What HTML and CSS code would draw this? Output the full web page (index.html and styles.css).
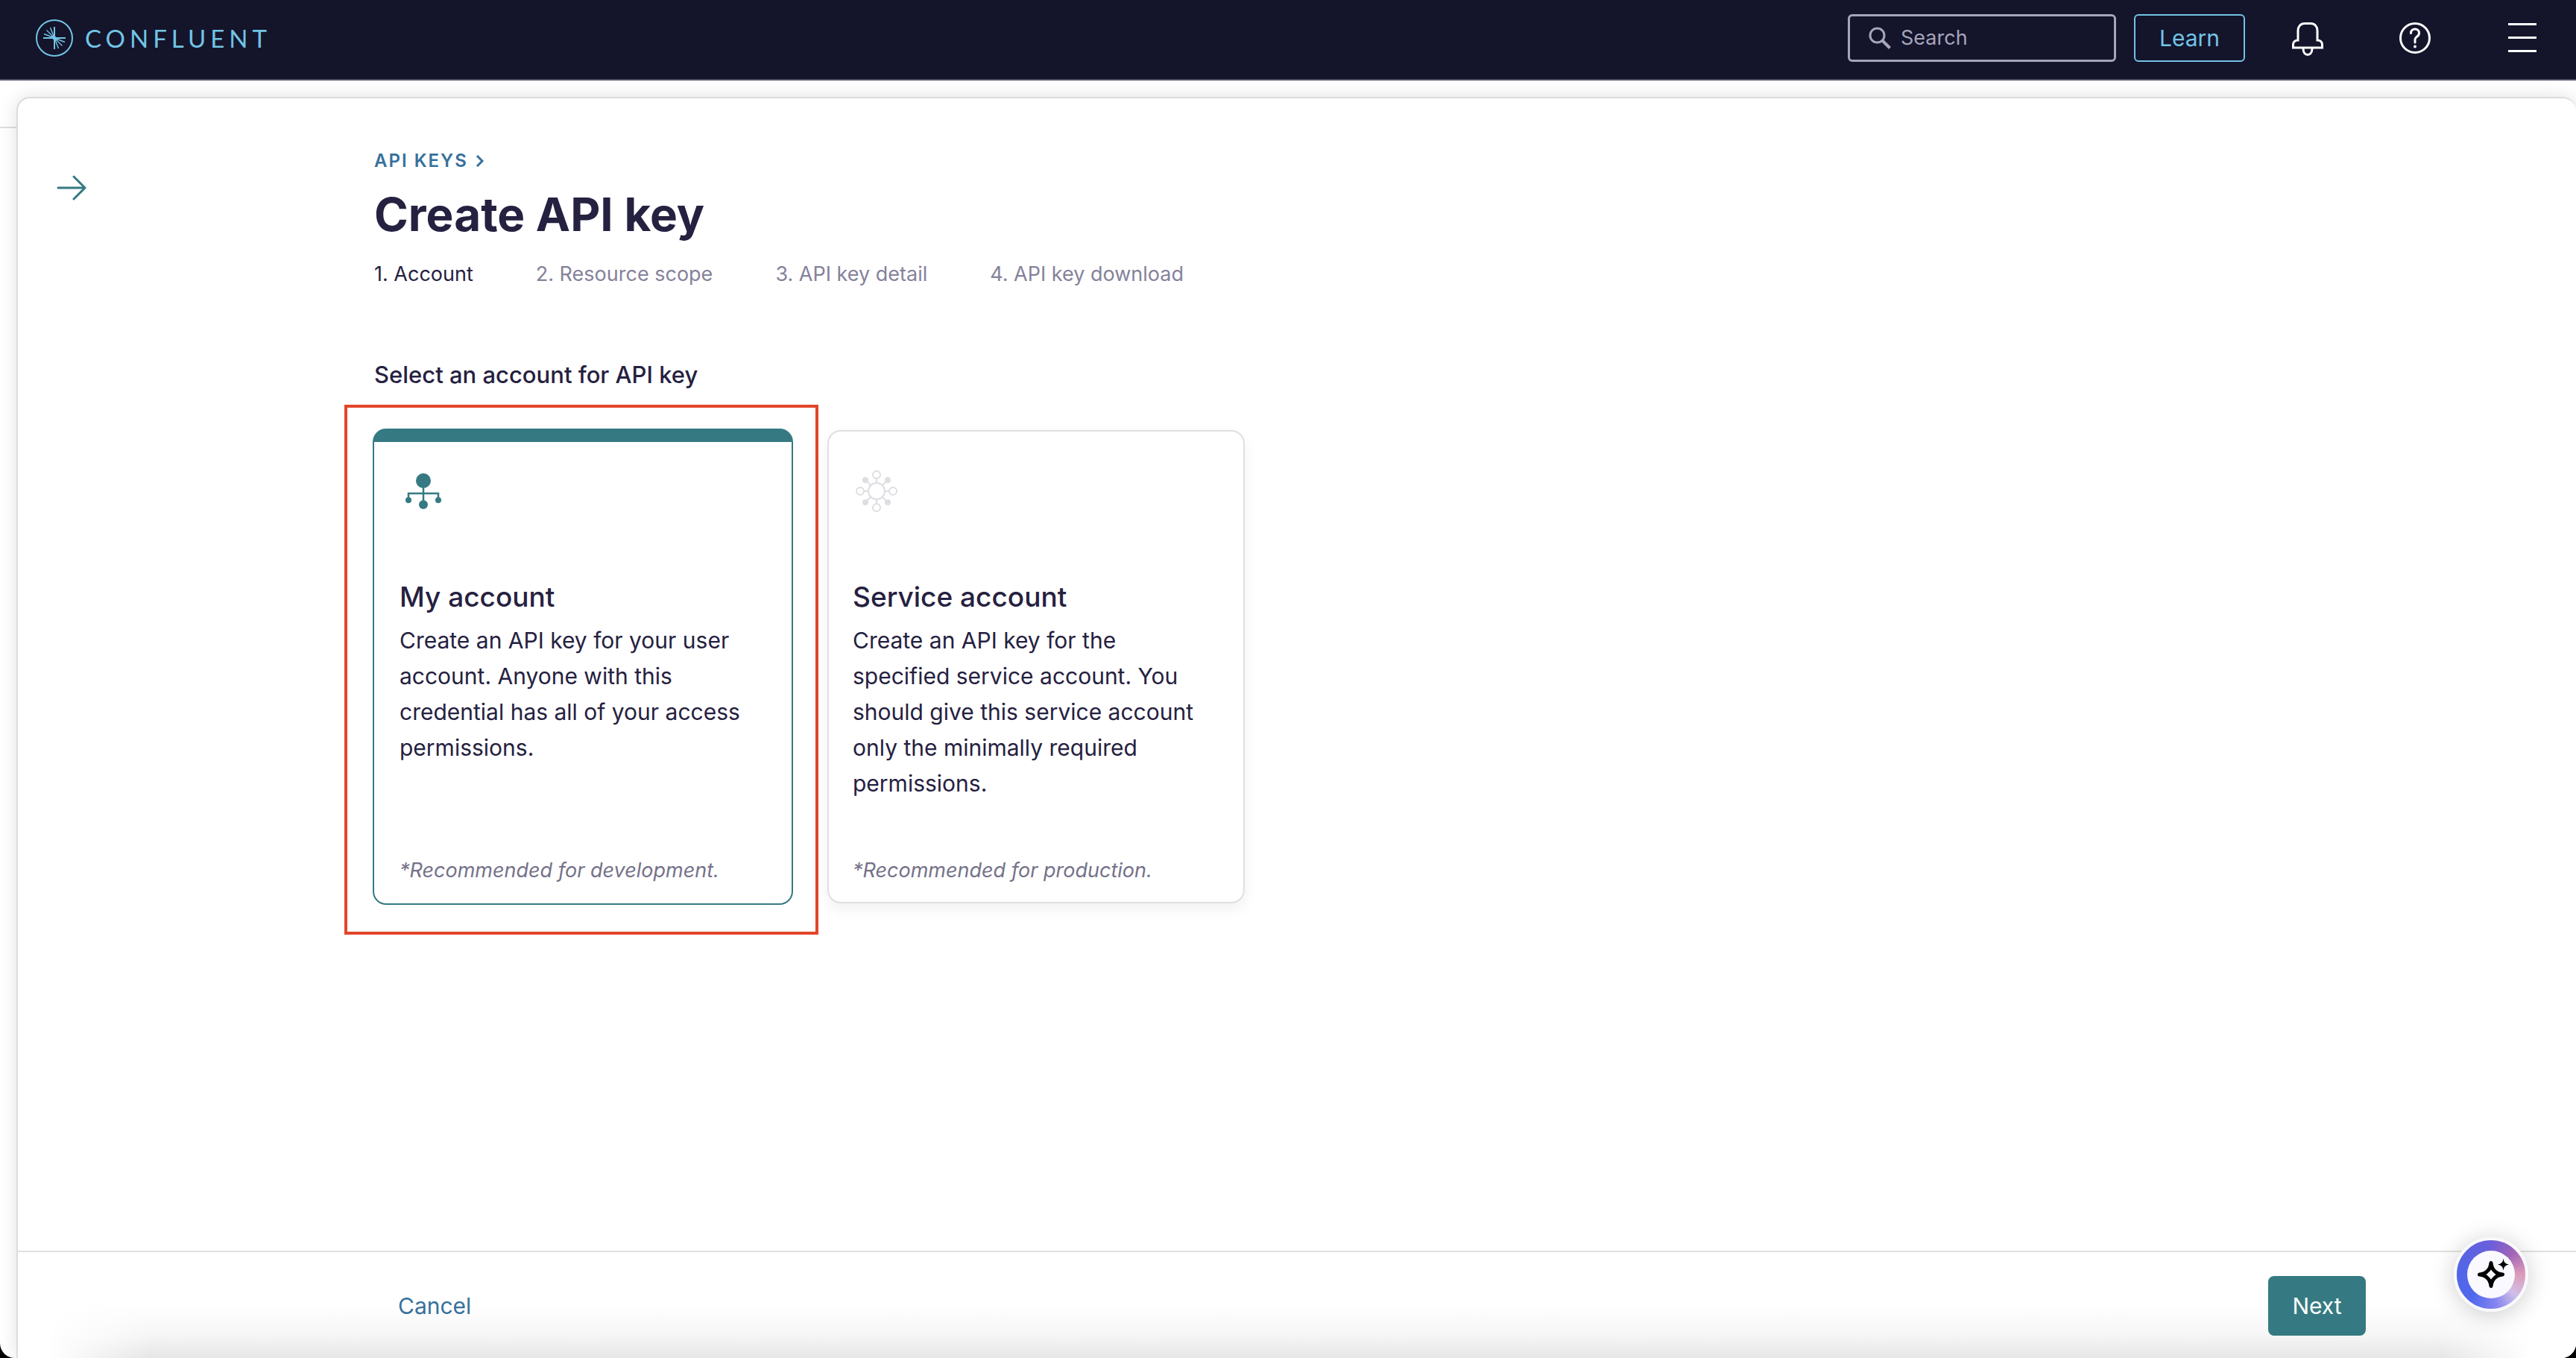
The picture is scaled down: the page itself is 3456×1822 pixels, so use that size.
FILE: index.html
```html
<!DOCTYPE html>
<html lang="en">
<head>
<meta charset="utf-8">
<meta name="viewport" content="width=device-width, initial-scale=1">
<title>Create API key</title>
<link rel="stylesheet" href="styles.css">
</head>
<body>
<header class="topbar">
  <a class="brand" href="#">
    <svg class="brand-mark" viewBox="0 0 50 50" fill="none" stroke="currentColor" aria-hidden="true">
      <circle cx="25" cy="25" r="24" stroke-width="2"/>
      <path stroke-width="2" d="M25 10v30M10 25h30"/>
      <path stroke-width="1.400" d="M25 25 19.500 11M25 25 14.500 14.500M25 25 11 19.500M25 25l5.500 14M25 25l10.500 10.500M25 25l14 5.500"/>
      <circle cx="25" cy="25" r="2.500" fill="currentColor" stroke="none"/>
    </svg>
    <span class="brand-name">CONFLUENT</span>
  </a>
  <div class="tools">
    <label class="search">
      <svg class="search-icon" viewBox="0 0 32 32" fill="none" stroke="currentColor" stroke-width="3" aria-hidden="true">
        <circle cx="12.500" cy="12.500" r="9.500"/><path stroke-width="4" d="m19.500 19.500 10 10"/>
      </svg>
      <input class="search-input" type="search" placeholder="Search" aria-label="Search">
    </label>
    <button class="learn" type="button">Learn</button>
    <button class="icon-button" type="button" aria-label="Notifications">
      <svg viewBox="0 0 48 48" fill="none" stroke="currentColor" stroke-width="3" aria-hidden="true">
        <path d="M20 4.500C14.500 4.500 11 8.500 11 14v13c-4 0-6.500 2.500-6.500 6v4h39v-4c0-3.500-2.500-6-6.500-6V14c0-5.500-3.500-9.500-9-9.500ZM18 38c0 5 2.500 8.500 6 8.500s6-3.500 6-8.500"/>
      </svg>
    </button>
    <button class="icon-button" type="button" aria-label="Help">
      <svg viewBox="0 0 48 48" fill="none" stroke="currentColor" stroke-width="3" stroke-linecap="round" aria-hidden="true">
        <circle cx="24" cy="24" r="19.500"/>
        <path d="M18.500 17.500c0-3.500 2.500-5.500 5.500-5.500s5.500 2 5.500 5.500c0 5-5.500 4.500-5.500 8.500v4"/>
        <circle cx="24" cy="35.500" r="2" fill="currentColor" stroke="none"/>
      </svg>
    </button>
    <button class="icon-button" type="button" aria-label="Menu">
      <svg viewBox="0 0 48 48" fill="none" stroke="currentColor" stroke-width="3" aria-hidden="true">
        <path d="M5 5.500h38M5 23.500h38M5 41.500h38"/>
      </svg>
    </button>
  </div>
</header>

<div class="stage">
  <main class="panel">
    <div class="panel-body">
      <button class="collapse" type="button" aria-label="Collapse panel">
        <svg viewBox="0 0 40 36" fill="none" stroke="currentColor" stroke-width="3" stroke-linecap="round" stroke-linejoin="round" aria-hidden="true">
          <path d="M2 18h36M23 3l15 15-15 15"/>
        </svg>
      </button>
      <div class="content">
        <a class="crumb" href="#">API KEYS
          <svg class="crumb-arrow" viewBox="0 0 12 16" fill="none" stroke="currentColor" stroke-width="3" aria-hidden="true"><path d="m2 1 7 7-7 7"/></svg>
        </a>
        <h1 class="title">Create API key</h1>
        <ol class="steps">
          <li class="step step-current">1. Account</li>
          <li class="step">2. Resource scope</li>
          <li class="step">3. API key detail</li>
          <li class="step">4. API key download</li>
        </ol>
        <h2 class="prompt">Select an account for API key</h2>
        <div class="cards">
          <div class="highlight">
            <button class="card card-selected" type="button" aria-pressed="true">
              <svg class="card-icon" viewBox="0 0 60 60" aria-hidden="true">
                <g fill="none" stroke="currentColor" stroke-width="2.500"><path d="M32 20v24M12 39V30h40v9"/></g>
                <g fill="currentColor"><circle cx="32" cy="13" r="10"/><circle cx="12" cy="39" r="4"/><circle cx="52" cy="39" r="4"/><circle cx="32" cy="45" r="6"/></g>
              </svg>
              <span class="card-title">My account</span>
              <span class="card-text">Create an API key for your user account. Anyone with this credential has all of your access permissions.</span>
              <span class="card-note">*Recommended for development.</span>
            </button>
          </div>
          <button class="card" type="button" aria-pressed="false">
            <svg class="card-icon card-icon-muted" viewBox="0 0 60 60" aria-hidden="true">
              <g fill="none" stroke="currentColor" stroke-width="2">
                <circle cx="32" cy="27" r="11"/>
                <circle cx="32" cy="5" r="5"/><circle cx="32" cy="49" r="5"/><circle cx="10" cy="27" r="5"/><circle cx="54" cy="27" r="5"/>
                <path d="M32 10v6M32 38v6M15 27h6M43 27h6M24 19l-7-7M40 19l7-7M24 35l-7 7M40 35l7 7"/>
              </g>
              <g fill="currentColor"><circle cx="17" cy="12" r="4"/><circle cx="47" cy="12" r="4"/><circle cx="17" cy="42" r="4"/><circle cx="47" cy="42" r="4"/></g>
            </svg>
            <span class="card-title">Service account</span>
            <span class="card-text">Create an API key for the specified service account. You should give this service account only the minimally required permissions.</span>
            <span class="card-note">*Recommended for production.</span>
          </button>
        </div>
      </div>
    </div>
    <footer class="actions">
      <a class="cancel" href="#">Cancel</a>
      <button class="next" type="button">Next</button>
    </footer>
  </main>
</div>

<button class="assistant" type="button" aria-label="Assistant">
  <span class="assistant-core">
    <svg viewBox="0 0 64 64" aria-hidden="true">
      <path fill="none" stroke="#000" stroke-width="5" stroke-linejoin="round" d="M32 16.500Q33.500 30.500 47.500 32Q33.500 33.500 32 47.500Q30.500 33.500 16.500 32Q30.500 30.500 32 16.500Z"/>
      <path fill="#f9f9ff" d="m32 26 6 6-6 6-6-6Z"/>
      <path fill="#000" d="M48.500 10.500Q49 17.500 56 18.500Q49 19.500 48.500 26.500Q48 19.500 41 18.500Q48 17.500 48.500 10.500Z"/>
    </svg>
  </span>
</button>
</body>
</html>
```
FILE: styles.css
```css
* { box-sizing: border-box; }

html { background: #000; }

body {
  display: flex;
  flex-direction: column;
  min-height: 100vh;
  margin: 0;
  overflow-x: hidden;
  background: #fff;
  border-radius: 0 0 20px 20px;
  color: #252140;
  font: 400 30px/48px Inter, "Liberation Sans", sans-serif;
}

button, input { font: inherit; color: inherit; }

button {
  padding: 0;
  border: 0;
  background: none;
  cursor: pointer;
}

a { color: #36719b; text-decoration: none; }

svg { display: block; }

.topbar {
  display: flex;
  align-items: center;
  justify-content: space-between;
  height: 108px;
  padding: 0 48px;
  padding-bottom: 4px;
  border-bottom: 2px solid #514f63;
  background: #14142b;
}

.brand {
  display: flex;
  align-items: center;
  gap: 16px;
  color: #72c4e4;
}

.brand-mark { width: 50px; height: 50px; }

.brand-name {
  font: 400 33px/48px Lato, sans-serif;
  letter-spacing: 6px;
}

.tools { display: flex; align-items: center; gap: 24px; }

.search {
  display: flex;
  align-items: center;
  gap: 12px;
  width: 360px;
  height: 64px;
  padding: 0 24px;
  border: 3px solid #a6a5ba;
  border-radius: 6px;
  color: #a6a5ba;
}

.search-icon { flex: none; width: 32px; height: 32px; }

.search-input {
  width: 100%;
  min-width: 0;
  padding: 0;
  border: 0;
  outline: 0;
  background: none;
  font-size: 27px;
}

.search-input::placeholder { color: #a6a5ba; opacity: 1; }

.learn {
  width: 149px;
  height: 64px;
  border: 2px solid #72c4e4;
  border-radius: 6px;
  color: #72c4e4;
}

.icon-button {
  width: 48px;
  height: 48px;
  margin-left: 36px;
  color: #fff;
}

.icon-button + .icon-button { margin-left: 72px; }

.stage {
  display: flex;
  flex: 1;
  padding: 22px 0 0 22px;
  background: linear-gradient(#dedede, #dedede) 0 62px / 100% 2px no-repeat;
}

.panel {
  display: flex;
  flex: 1;
  flex-direction: column;
  border: 2px solid #dcdcdc;
  border-width: 2px 0 0 2px;
  border-radius: 18px 18px 0 0;
  background: #fff;
  box-shadow: 0 0 24px rgba(0, 0, 0, 0.12);
}

.panel-body {
  display: flex;
  flex: 1;
  padding: 64px 52px 0;
}

.collapse {
  flex: none;
  align-self: flex-start;
  width: 40px;
  height: 36px;
  margin-top: 38px;
  color: #357a82;
}

.content { padding-left: 386px; }

.crumb {
  display: flex;
  align-items: center;
  gap: 10px;
  font-size: 24px;
  font-weight: 600;
  line-height: 40px;
  letter-spacing: 2px;
}

.crumb-arrow { width: 12px; height: 16px; }

.title {
  margin: 12px 0 20px;
  font-size: 62px;
  font-weight: 700;
  line-height: 80px;
}

.steps {
  display: flex;
  gap: 84px;
  margin: 0;
  padding: 0;
  list-style: none;
  font-size: 27px;
  line-height: 40px;
  color: #85829a;
}

.step-current { color: #252140; }

.prompt {
  margin: 91px 0 16px;
  font-size: 31px;
  font-weight: 500;
}

.cards {
  display: flex;
  align-items: flex-start;
  gap: 12px;
  margin-left: -40px;
}

.highlight {
  padding: 28px 30px 36px 34px;
  border: 4px solid #e2452b;
}

.card {
  display: flex;
  flex-direction: column;
  width: 560px;
  min-height: 635px;
  margin-top: 34px;
  padding: 53px 48px 18px 32px;
  border: 2px solid #e0e0e2;
  border-radius: 18px;
  background: #fff;
  box-shadow: 0 8px 20px rgba(0, 0, 0, 0.06);
  text-align: left;
}

.card-selected {
  width: 564px;
  min-height: 639px;
  margin-top: 0;
  padding: 39px 48px 20px 34px;
  border-color: #357a82;
  border-top-width: 18px;
  box-shadow: none;
}

.card-icon { width: 60px; height: 60px; color: #357a82; }

.card-icon-muted { color: #dedee2; overflow: visible; }

.card-title {
  margin-top: 81px;
  font-size: 37px;
  font-weight: 500;
  line-height: 56px;
}

.card-text { margin-top: 6px; }

.card-note {
  margin-top: auto;
  font-size: 27px;
  font-style: italic;
  color: #75728a;
}

.actions {
  display: flex;
  align-items: center;
  justify-content: space-between;
  height: 144px;
  padding: 2px 282px 0 510px;
  border-top: 2px solid #e1e1e1;
  background:
    linear-gradient(90deg, #fff 40px, transparent 180px, transparent calc(100% - 180px), #fff calc(100% - 60px)),
    linear-gradient(transparent 50%, #f6f6f6 78%, #e6e6e6);
}

.next {
  width: 131px;
  height: 80px;
  border-radius: 8px;
  background: #357a82;
  color: #fff;
}

.assistant {
  position: fixed;
  right: 64px;
  bottom: 62px;
  width: 100px;
  height: 100px;
  padding: 14px;
  border: 4px solid #f9f9fd;
  border-radius: 50%;
  background: conic-gradient(#6b5fdb, #a064b8 45deg, #dc9cb8 90deg, #d0bfe8 130deg, #8585f0 170deg, #5068ee 220deg, #5465e5 290deg, #6b5fdb);
  box-shadow: 0 4px 32px rgba(0, 0, 0, 0.2);
}

.assistant-core {
  display: block;
  border-radius: 50%;
  background: #f9f9ff;
}
```
